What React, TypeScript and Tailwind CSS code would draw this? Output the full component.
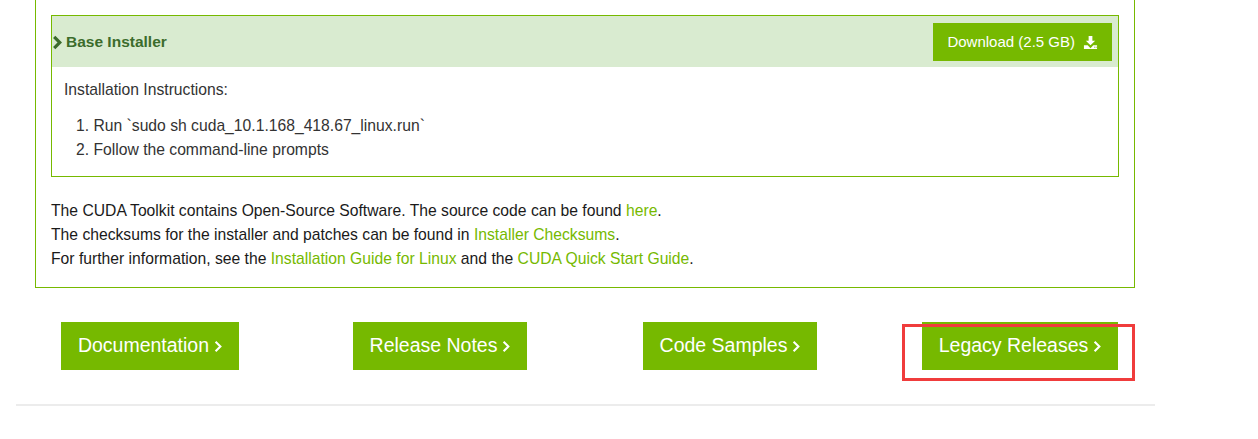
import React from "react";

const font = { fontFamily: '"Liberation Sans", Arial, sans-serif' };

function Chevron({ className = "", width = 2.6 }: { className?: string; width?: number }) {
  return (
    <svg viewBox="0 0 10 16" className={className} fill="none" stroke="currentColor" strokeWidth={width} strokeLinecap="butt" strokeLinejoin="miter">
      <path d="M2 2 L8 8 L2 14" />
    </svg>
  );
}

function DownloadIcon() {
  return (
    <svg viewBox="0 0 16 16" className="w-[15px] h-[15px]" fill="currentColor">
      <path d="M6 1h4v5h3l-5 5-5-5h3z" />
      <path d="M1 11h4l3 3 3-3h4v4H1z" />
      <rect x="12" y="12.5" width="1" height="1" fill="#76b900" />
      <rect x="13.6" y="12.5" width="1" height="1" fill="#76b900" />
    </svg>
  );
}

function NavButton({ label }: { label: string }) {
  return (
    <div className="w-[290px] shrink-0 flex justify-center">
      <a className="h-[48px] px-[17px] bg-[#76b900] text-white text-[19.5px] flex items-center gap-[5px]">
        <span>{label}</span>
        <Chevron className="w-[8px] h-[13px] mt-[1px]" />
      </a>
    </div>
  );
}

export default function App() {
  return (
    <div className="w-[1258px] h-[439px] bg-white overflow-hidden relative text-[#1a1a1a]" style={font}>
      <div className="ml-[16px] w-[1139px]">
        <div className="pl-[19px] pr-[20px]">
          <div className="border-x border-b border-[#76b900] px-[15px] pt-[15px] pb-[16px]">
            <div className="border border-[#76b900]">
              <div className="bg-[#d9ebd0] h-[51px] flex items-center justify-between pr-[6px] pt-[1px]">
                <div className="flex items-center gap-[4px] text-[#3c6c2c] font-bold text-[15.5px]">
                  <Chevron className="w-[10px] h-[15px]" width={3.4} />
                  <span>Base Installer</span>
                </div>
                <a className="h-[38px] px-[14px] bg-[#76b900] text-white text-[15px] flex items-center gap-[8px]">
                  <span>Download (2.5 GB)</span>
                  <DownloadIcon />
                </a>
              </div>
              <div className="px-[12px] pt-[11px] pb-[14px] text-[15.7px] leading-[24px] text-[#333]">
                <p>Installation Instructions:</p>
                <ol className="mt-[12px] pl-[12px]">
                  <li>1. Run `sudo sh cuda_10.1.168_418.67_linux.run`</li>
                  <li>2. Follow the command-line prompts</li>
                </ol>
              </div>
            </div>
            <div className="mt-[22px] text-[15.7px] leading-[24px] text-[#1a1a1a]">
              <p>
                The CUDA Toolkit contains Open-Source Software. The source code can be found{" "}
                <a className="text-[#76b900]">here</a>.
              </p>
              <p>
                The checksums for the installer and patches can be found in{" "}
                <a className="text-[#76b900]">Installer Checksums</a>.
              </p>
              <p>
                For further information, see the{" "}
                <a className="text-[#76b900]">Installation Guide for Linux</a> and the{" "}
                <a className="text-[#76b900]">CUDA Quick Start Guide</a>.
              </p>
            </div>
          </div>
        </div>
        <div className="flex mt-[34px] -ml-[11px]">
          <NavButton label="Documentation" />
          <NavButton label="Release Notes" />
          <NavButton label="Code Samples" />
          <NavButton label="Legacy Releases" />
        </div>
        <div className="mt-[34px] h-[2px] bg-[#ececec]" />
      </div>
      <div className="absolute left-[902px] top-[324px] w-[233px] h-[57px] border-[3px] border-[#f03c3c]" />
    </div>
  );
}
